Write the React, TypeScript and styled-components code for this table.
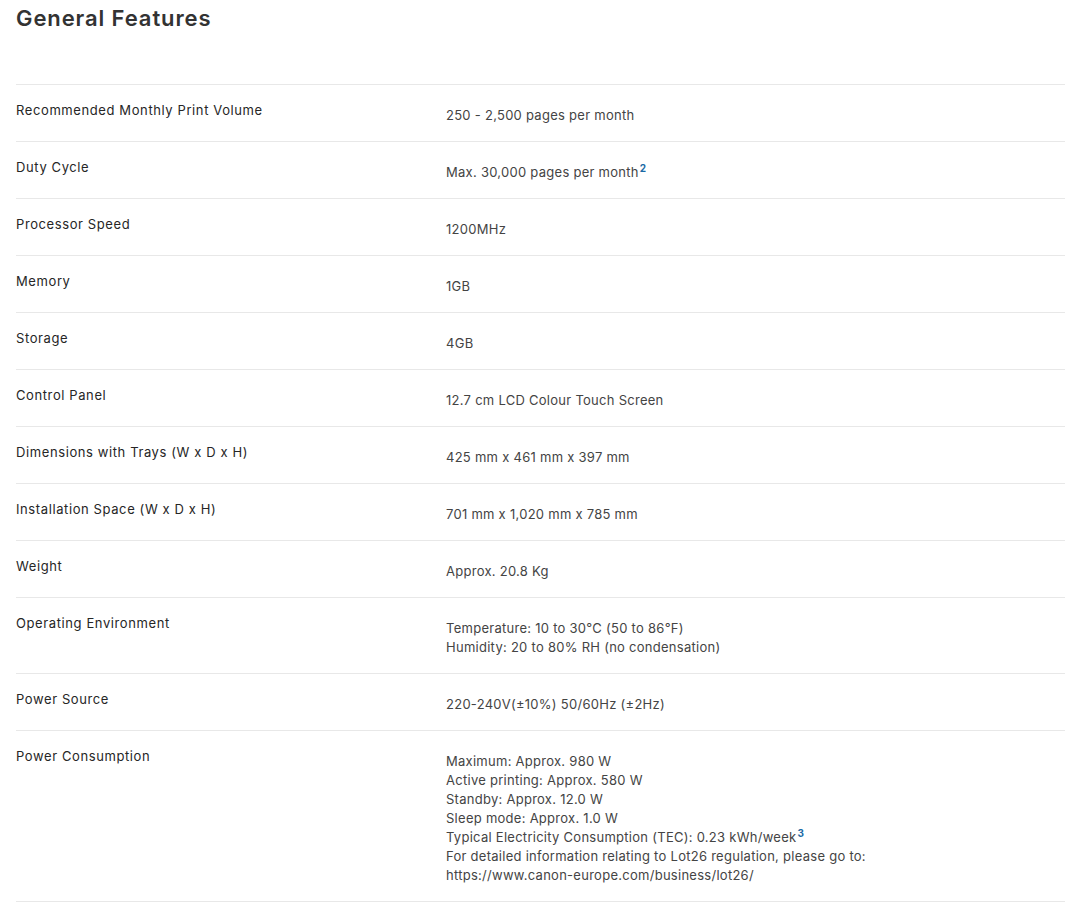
import styled, { createGlobalStyle } from "styled-components";

type Spec = {
  label: string;
  lines: { text: string; note?: string }[];
};

const specs: Spec[] = [
  { label: "Recommended Monthly Print Volume", lines: [{ text: "250 - 2,500 pages per month" }] },
  { label: "Duty Cycle", lines: [{ text: "Max. 30,000 pages per month", note: "2" }] },
  { label: "Processor Speed", lines: [{ text: "1200MHz" }] },
  { label: "Memory", lines: [{ text: "1GB" }] },
  { label: "Storage", lines: [{ text: "4GB" }] },
  { label: "Control Panel", lines: [{ text: "12.7 cm LCD Colour Touch Screen" }] },
  { label: "Dimensions with Trays (W x D x H)", lines: [{ text: "425 mm x 461 mm x 397 mm" }] },
  { label: "Installation Space (W x D x H)", lines: [{ text: "701 mm x 1,020 mm x 785 mm" }] },
  { label: "Weight", lines: [{ text: "Approx. 20.8 Kg" }] },
  {
    label: "Operating Environment",
    lines: [
      { text: "Temperature: 10 to 30°C (50 to 86°F)" },
      { text: "Humidity: 20 to 80% RH (no condensation)" },
    ],
  },
  { label: "Power Source", lines: [{ text: "220-240V(±10%) 50/60Hz (±2Hz)" }] },
  {
    label: "Power Consumption",
    lines: [
      { text: "Maximum: Approx. 980 W" },
      { text: "Active printing: Approx. 580 W" },
      { text: "Standby: Approx. 12.0 W" },
      { text: "Sleep mode: Approx. 1.0 W" },
      { text: "Typical Electricity Consumption (TEC): 0.23 kWh/week", note: "3" },
      { text: "For detailed information relating to Lot26 regulation, please go to:" },
      { text: "https://www.canon-europe.com/business/lot26/" },
    ],
  },
];

const App = () => {
  return (
    <>
      <GlobalStyle />
      <Page>
        <Title>General Features</Title>
        <Table>
          {specs.map((spec) => (
            <Row key={spec.label}>
              <Label>{spec.label}</Label>
              <Value>
                {spec.lines.map((line) => (
                  <div key={line.text}>
                    {line.text}
                    {line.note && <Note>{line.note}</Note>}
                  </div>
                ))}
              </Value>
            </Row>
          ))}
        </Table>
      </Page>
    </>
  );
};

const GlobalStyle = createGlobalStyle`
  body {
    margin: 0;
    background: #fff;
    font-family: "Inter", "Open Sans", sans-serif;
  }
`;

const Page = styled.div`
  padding: 0 0 0 16px;
`;

const Title = styled.h1`
  margin: 0;
  padding-top: 5px;
  height: 79px;
  font-size: 22px;
  font-weight: 600;
  color: #333;
  letter-spacing: 0.9px;
`;

const Table = styled.div`
  display: flex;
  flex-direction: column;
`;

const Row = styled.div`
  display: grid;
  grid-template-columns: 430px 1fr;
  border-top: 1px solid #e8e8e8;
  padding: 16px 0;
  font-size: 13px;
  line-height: 19px;

  &:last-child {
    border-bottom: 1px solid #e8e8e8;
  }
`;

const Label = styled.div`
  color: #262626;
  font-weight: 400;
  letter-spacing: 0.6px;
`;

const Value = styled.div`
  padding-top: 5px;
  color: #444;
  font-weight: 400;
  letter-spacing: 0.27px;
`;

const Note = styled.sup`
  font-size: 10px;
  font-weight: 700;
  color: #1b6aa5;
  line-height: 0;
  margin-left: 1px;
  letter-spacing: 0;
`;

export default App;
